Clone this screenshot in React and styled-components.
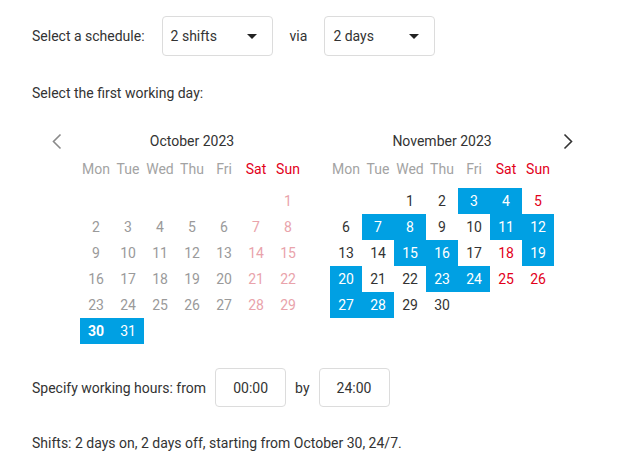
import React from "react";
import styled, { createGlobalStyle, css } from "styled-components";

const GlobalStyle = createGlobalStyle`
  body {
    margin: 0;
    background: #fff;
    font-family: Roboto, "Liberation Sans", Arial, sans-serif;
    font-size: 14px;
    color: #333;
  }
`;

const Page = styled.div`
  padding: 16px 32px;
`;

const Row = styled.div`
  display: flex;
  align-items: center;
  gap: ${(p) => p.$gap || 16}px;
  margin-top: ${(p) => p.$top || 0}px;
`;

const Label = styled.span`
  line-height: 20px;
`;

const Text = styled.div`
  line-height: 20px;
  margin-top: ${(p) => p.$top || 0}px;
`;

const SelectBox = styled.div`
  box-sizing: border-box;
  width: 111px;
  height: 40px;
  border: 1px solid #dcdcdc;
  border-radius: 4px;
  padding: 0 15px 0 8px;
  display: flex;
  align-items: center;
  justify-content: space-between;
`;

const Caret = styled.span`
  width: 0;
  height: 0;
  border-left: 5px solid transparent;
  border-right: 5px solid transparent;
  border-top: 5px solid #222;
`;

const TimeInput = styled.div`
  box-sizing: border-box;
  width: 71px;
  height: 39px;
  border: 1px solid #dcdcdc;
  border-radius: 4px;
  display: flex;
  align-items: center;
  justify-content: center;
`;

const Calendars = styled.div`
  display: flex;
  align-items: flex-start;
  margin-top: 26px;
  padding-left: 13px;
`;

const NavButton = styled.div`
  width: 24px;
  height: 24px;
  display: flex;
  align-items: center;
  justify-content: center;
  margin: ${(p) => (p.$right ? "0 0 0 2px" : "0 11px 0 0")};
`;

const Month = styled.div`
  width: 224px;
  & + & {
    margin-left: 26px;
  }
`;

const MonthTitle = styled.div`
  height: 24px;
  line-height: 24px;
  text-align: center;
  color: #333;
`;

const Grid = styled.div`
  display: grid;
  grid-template-columns: repeat(7, 32px);
  grid-auto-rows: ${(p) => p.$row}px;
  margin-top: ${(p) => p.$top}px;
`;

const WeekDay = styled.div`
  display: flex;
  align-items: center;
  justify-content: center;
  color: ${(p) => (p.$weekend ? "#e2001a" : "#a3a3a3")};
`;

const Day = styled.div`
  display: flex;
  align-items: center;
  justify-content: center;
  color: ${(p) =>
    p.$past ? (p.$weekend ? "#e9a3ab" : "#9a9a9a") : p.$weekend ? "#e2001a" : "#333"};
  ${(p) =>
    p.$on &&
    css`
      background: #00a0e3;
      color: #fff;
    `}
  font-weight: ${(p) => (p.$bold ? 700 : 400)};
`;

const Chevron = ({ right }) => (
  <svg width="10" height="17" viewBox="0 0 10 17" fill="none">
    <path
      d={right ? "M1.5 1.5 L8.5 8.5 L1.5 15.5" : "M8.5 1.5 L1.5 8.5 L8.5 15.5"}
      stroke={right ? "#333" : "#8a8a8a"}
      strokeWidth="1.6"
    />
  </svg>
);

const weekDays = ["Mon", "Tue", "Wed", "Thu", "Fri", "Sat", "Sun"];

const CalendarMonth = ({ title, offset, days, past, on, bold }) => {
  const cells = [];
  for (let i = 0; i < offset; i++) cells.push(<div key={"e" + i} />);
  for (let d = 1; d <= days; d++) {
    const col = (offset + d - 1) % 7;
    cells.push(
      <Day
        key={d}
        $past={past}
        $weekend={col >= 5}
        $on={on.includes(d)}
        $bold={bold === d}
      >
        {d}
      </Day>
    );
  }
  return (
    <Month>
      <MonthTitle>{title}</MonthTitle>
      <Grid $row={24} $top={4}>
        {weekDays.map((w, i) => (
          <WeekDay key={w} $weekend={i >= 5}>
            {w}
          </WeekDay>
        ))}
      </Grid>
      <Grid $row={26} $top={7}>
        {cells}
      </Grid>
    </Month>
  );
};

const novOn = [3, 4, 7, 8, 11, 12, 15, 16, 19, 20, 23, 24, 27, 28];

export default function App() {
  return (
    <Page>
      <GlobalStyle />
      <Row $gap={17}>
        <Label>Select a schedule:</Label>
        <SelectBox>
          2 shifts <Caret />
        </SelectBox>
        <Label>via</Label>
        <SelectBox>
          2 days <Caret />
        </SelectBox>
      </Row>
      <Text $top={27}>Select the first working day:</Text>
      <Calendars>
        <NavButton>
          <Chevron />
        </NavButton>
        <CalendarMonth title="October 2023" offset={6} days={31} past on={[30, 31]} bold={30} />
        <CalendarMonth title="November 2023" offset={2} days={30} on={novOn} />
        <NavButton $right>
          <Chevron right />
        </NavButton>
      </Calendars>
      <Row $gap={9} $top={24}>
        <Label>Specify working hours: from</Label>
        <TimeInput>00:00</TimeInput>
        <Label>by</Label>
        <TimeInput>24:00</TimeInput>
      </Row>
      <Text $top={26}>Shifts: 2 days on, 2 days off, starting from October 30, 24/7.</Text>
    </Page>
  );
}
